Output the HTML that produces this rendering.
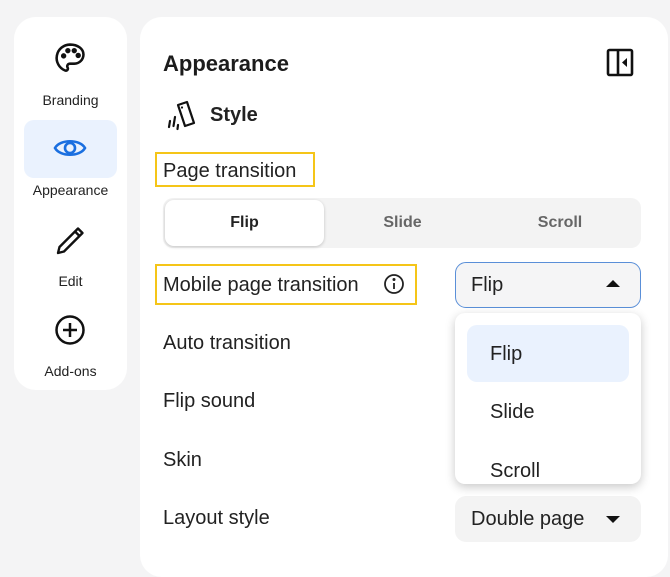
<!DOCTYPE html>
<html><head><style>
*{margin:0;padding:0;box-sizing:border-box}
body{width:670px;height:552px;background:#f4f4f5;font-family:"Liberation Sans",Arial,sans-serif;color:#1c1c1c;position:relative;overflow:hidden}
.a{position:absolute}
.lbl{position:absolute;width:113px;left:14px;text-align:center;font-size:14px;color:#222}
.t{position:absolute;font-size:20px;color:#222;line-height:1}
</style></head><body>
<div class="a" style="left:14px;top:17px;width:113px;height:373px;background:#fff;border-radius:22px"></div>
<div class="a" style="left:24px;top:120px;width:93px;height:58px;background:#eaf2fe;border-radius:10px"></div>
<svg class="a" style="left:53px;top:41px" width="34" height="34" viewBox="0 0 24 24" fill="none" stroke="#111" stroke-width="1.8"><path d="M12 2.5a9.5 9.5 0 0 0-3.5 18.3c1.6.6 2.4-1 1.8-2.1-.7-1.3.2-2.7 1.7-2.7H15a6.5 6.5 0 0 0 6.5-6.5C21.5 5.5 17.5 2.5 12 2.5z"/><circle cx="7.5" cy="10.5" r="1" fill="#111"/><circle cx="10.5" cy="6.8" r="1" fill="#111"/><circle cx="15" cy="6.8" r="1" fill="#111"/><circle cx="17.8" cy="10.2" r="1" fill="#111"/></svg>
<div class="lbl" style="top:92px">Branding</div>
<svg class="a" style="left:53px;top:134px" width="34" height="28" viewBox="0 0 34 28" fill="none" stroke="#1a6fe0" stroke-width="2.6"><path d="M2 14C7 5 27 5 32 14 27 23 7 23 2 14z"/><circle cx="17" cy="14" r="5"/></svg>
<div class="lbl" style="top:182px">Appearance</div>
<svg class="a" style="left:55px;top:224px" width="32" height="32" viewBox="0 0 32 32" fill="none" stroke="#111" stroke-width="2.4" stroke-linejoin="round"><path d="M3 29l1.5-6L23 4.5l4.5 4.5L9 27.5z"/><path d="M20 7.5l4.5 4.5"/></svg>
<div class="lbl" style="top:273px">Edit</div>
<svg class="a" style="left:54px;top:314px" width="32" height="32" viewBox="0 0 32 32" fill="none" stroke="#111" stroke-width="2.5"><circle cx="16" cy="16" r="13.5"/><path d="M16 9v14M9 16h14"/></svg>
<div class="lbl" style="top:363px">Add-ons</div>

<div class="a" style="left:140px;top:17px;width:528px;height:560px;background:#fff;border-radius:22px"></div>
<div class="t" style="left:163px;top:53px;font-size:22px;font-weight:bold;color:#1c1c1c">Appearance</div>
<svg class="a" style="left:606px;top:48px" width="28" height="30" viewBox="0 0 28 30" fill="none" stroke="#111" stroke-width="2.6"><rect x="2" y="2" width="24" height="25" rx="1.5"/><path d="M12 2v25"/><path d="M21 10l-5 4.5 5 4.5z" fill="#111" stroke="none"/></svg>
<svg class="a" style="left:164px;top:100px" width="34" height="32" viewBox="0 0 34 32" fill="none" stroke="#111" stroke-width="2.2" stroke-linejoin="round"><path d="M14 5l9-3 7 21-9 3z"/><path d="M11 17l-1.5 9M6 21l-1 6M14 25l-.5 4" stroke-width="2.2" stroke-linecap="round"/><circle cx="18" cy="7.5" r="1.1" fill="#111" stroke="none"/></svg>
<div class="t" style="left:210px;top:105px;font-weight:bold">Style</div>
<div class="a" style="left:155px;top:152px;width:160px;height:35px;border:2.5px solid #f5c518"></div>
<div class="t" style="left:163px;top:161px">Page transition</div>
<div class="a" style="left:163px;top:198px;width:478px;height:50px;background:#f3f3f3;border-radius:10px"></div>
<div class="a" style="left:165px;top:200px;width:159px;height:46px;background:#fff;border-radius:9px;box-shadow:0 1px 3px rgba(0,0,0,.2)"></div>
<div class="t" style="left:165px;width:159px;text-align:center;top:215px;font-size:16px;font-weight:bold">Flip</div>
<div class="t" style="left:324px;width:157px;text-align:center;top:215px;font-size:16px;font-weight:bold;color:#666">Slide</div>
<div class="t" style="left:481px;width:158px;text-align:center;top:215px;font-size:16px;font-weight:bold;color:#666">Scroll</div>
<div class="a" style="left:155px;top:264px;width:262px;height:41px;border:2.5px solid #f5c518"></div>
<div class="t" style="left:163px;top:275px">Mobile page transition</div>
<svg class="a" style="left:383px;top:273px" width="22" height="22" viewBox="0 0 22 22" fill="none" stroke="#222" stroke-width="1.8"><circle cx="11" cy="11" r="9"/><path d="M11 10v6"/><circle cx="11" cy="6.5" r=".6" fill="#222"/></svg>
<div class="a" style="left:455px;top:262px;width:186px;height:46px;background:#f5f5f6;border:1.5px solid #5a8fd8;border-radius:11px"></div>
<div class="t" style="left:471px;top:275px">Flip</div>
<div class="a" style="left:606px;top:280px;width:0;height:0;border-left:7px solid transparent;border-right:7px solid transparent;border-bottom:7px solid #111"></div>
<div class="t" style="left:163px;top:333px">Auto transition</div>
<div class="t" style="left:163px;top:391px">Flip sound</div>
<div class="t" style="left:163px;top:450px">Skin</div>
<div class="t" style="left:163px;top:508px">Layout style</div>
<div class="a" style="left:455px;top:496px;width:186px;height:46px;background:#f3f3f3;border-radius:11px"></div>
<div class="t" style="left:471px;top:509px">Double page</div>
<div class="a" style="left:606px;top:516px;width:0;height:0;border-left:7px solid transparent;border-right:7px solid transparent;border-top:7px solid #111"></div>
<div class="a" style="left:455px;top:313px;width:186px;height:171px;background:#fff;border-radius:10px;box-shadow:0 3px 10px rgba(0,0,0,.22)"></div>
<div class="a" style="left:467px;top:325px;width:162px;height:57px;background:#eaf2fe;border-radius:10px"></div>
<div class="t" style="left:490px;top:344px">Flip</div>
<div class="t" style="left:490px;top:402px">Slide</div>
<div class="t" style="left:490px;top:461px">Scroll</div>
</body></html>
